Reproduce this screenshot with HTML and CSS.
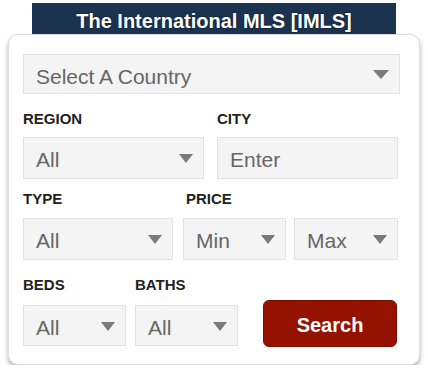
FILE: index.html
```html
<!DOCTYPE html>
<html>
<head>
<meta charset="utf-8">
<link rel="stylesheet" href="styles.css">
</head>
<body>
<div class="widget">
  <div class="title">The International MLS [IMLS]</div>
  <div class="card">
    <div class="select wide"><span>Select A Country</span><i class="arrow big"></i></div>

    <div class="row r1">
      <div class="field f-half">
        <div class="label">REGION</div>
        <div class="select"><span>All</span><i class="arrow"></i></div>
      </div>
      <div class="field f-half">
        <div class="label">CITY</div>
        <div class="select input"><span>Enter</span></div>
      </div>
    </div>

    <div class="row r2">
      <div class="field f-type">
        <div class="label">TYPE</div>
        <div class="select"><span>All</span><i class="arrow"></i></div>
      </div>
      <div class="field f-price">
        <div class="label price-label">PRICE</div>
        <div class="pair">
          <div class="select s-min"><span>Min</span><i class="arrow"></i></div>
          <div class="select s-max"><span>Max</span><i class="arrow"></i></div>
        </div>
      </div>
    </div>

    <div class="row r3">
      <div class="field f-small">
        <div class="label">BEDS</div>
        <div class="select"><span>All</span><i class="arrow"></i></div>
      </div>
      <div class="field f-small">
        <div class="label">BATHS</div>
        <div class="select"><span>All</span><i class="arrow"></i></div>
      </div>
      <button class="search">Search</button>
    </div>
  </div>
</div>
</body>
</html>
```
FILE: styles.css
```css
* { box-sizing: border-box; }
html, body { margin: 0; padding: 0; background: #ffffff; }
body { font-family: "Liberation Sans", Arial, sans-serif; }

.widget {
  width: 428px;
  padding-top: 3px;
}

.title {
  margin-left: 32px;
  width: 364px;
  height: 31px;
  background: #1c3350;
  color: #ffffff;
  font-weight: bold;
  font-size: 20px;
  line-height: 37px;
  text-align: center;
  text-shadow: 0 0 2px rgba(0,0,0,0.6);
  overflow: hidden;
}

.card {
  margin-left: 8px;
  width: 412px;
  height: 331px;
  border: 1px solid #dcdcdc;
  border-radius: 10px;
  background: #ffffff;
  box-shadow: 0 3px 5px rgba(0,0,0,0.3);
  padding: 19px 20px 0 14px;
}

.select {
  position: relative;
  height: 42px;
  background: #f4f4f4;
  border: 1px solid #e2e2e2;
  color: #666666;
  font-size: 21px;
  display: flex;
  align-items: center;
  padding-left: 12px;
  padding-top: 4px;
}

.select.wide { height: 40px; width: 377px; padding-top: 5px; }

.arrow {
  position: absolute;
  right: 10px;
  top: 50%;
  margin-top: -4px;
  width: 0; height: 0;
  border-left: 7px solid transparent;
  border-right: 7px solid transparent;
  border-top: 9px solid #7a7a7a;
}
.arrow.big {
  right: 10px;
  border-left-width: 8px;
  border-right-width: 8px;
}

.row { display: flex; }
.label {
  font-size: 15px;
  font-weight: bold;
  color: #222222;
  line-height: 16px;
  height: 16px;
}

.r1 { gap: 13px; }
.r1 .label { margin-top: 17px; margin-bottom: 10px; }
.f-half { width: 181px; }

.r2 { gap: 10px; }
.r2 .label { margin-top: 12px; margin-bottom: 11px; }
.f-type { width: 150px; }
.f-price { width: 215px; }
.price-label { padding-left: 3px; }
.pair { display: flex; gap: 8px; }
.s-min { width: 103px; }
.s-max { width: 104px; }

.r3 { gap: 9px; align-items: flex-end; }
.r3 .label { margin-top: 17px; margin-bottom: 12px; }
.f-small { width: 103px; }
.f-small .select { height: 41px; }

.search {
  margin-left: 16px;
  margin-bottom: -1px;
  width: 134px;
  height: 47px;
  background: #961200;
  border: 1px solid #7d0f00;
  border-radius: 6px;
  color: #ffffff;
  font-family: "Liberation Sans", Arial, sans-serif;
  font-size: 20px;
  font-weight: bold;
  padding: 3px 0 0 0;
}
```
